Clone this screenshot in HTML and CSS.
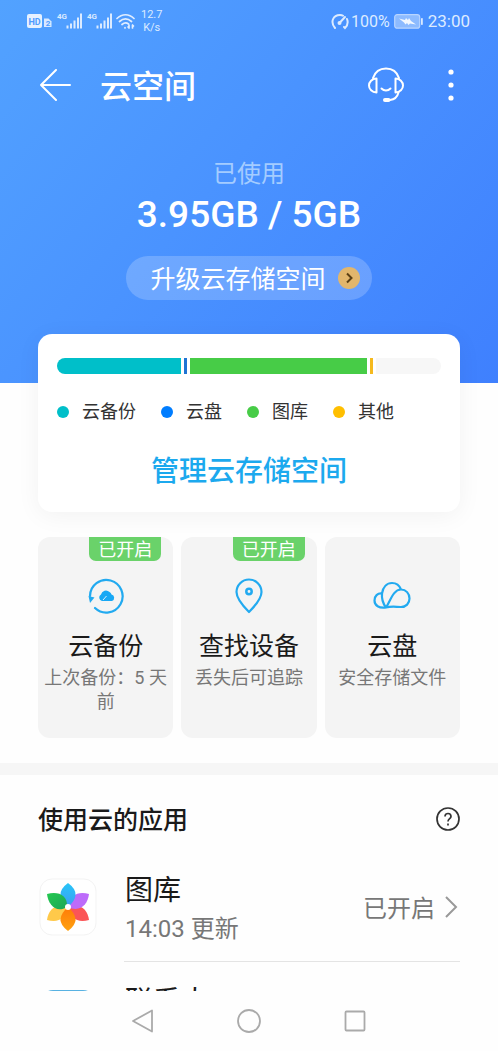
FILE: index.html
```html
<!DOCTYPE html>
<html lang="zh-CN">
<head>
<meta charset="utf-8">
<meta name="viewport" content="width=device-width, initial-scale=1">
<title>云空间</title>
<link rel="stylesheet" href="styles.css">
</head>
<body>
<div class="app">
  <main class="content">
    <div class="hero">
      <div class="status">
        <svg class="hd" width="25" height="16" viewBox="0 0 25 16" aria-hidden="true">
          <rect x="0" y="1" width="15" height="14" rx="2" fill="#e6f1ff"/>
          <text x="7.500" y="12" text-anchor="middle" class="hd-text">HD</text>
          <path d="M17 5.500h4.500l3 3V14h-7.500z" fill="#d9e9ff"/>
          <text x="21" y="13" text-anchor="middle" class="hd-num">2</text>
        </svg>
        <div class="signal">
          <span class="net">4G</span>
          <svg width="16" height="16" viewBox="0 0 16 16" aria-hidden="true"><path d="M1.500 15.500v-3M5 15.500v-5M8.500 15.500v-8M12 15.500v-11M15 15.500v-15" stroke="#dcebff" stroke-width="2"/></svg>
        </div>
        <div class="signal">
          <span class="net">4G</span>
          <svg width="16" height="16" viewBox="0 0 16 16" aria-hidden="true"><path d="M1.500 15.500v-3M5 15.500v-5M8.500 15.500v-8M12 15.500v-11M15 15.500v-15" stroke="#dcebff" stroke-width="2"/></svg>
        </div>
        <svg class="wifi" width="19" height="17" viewBox="0 0 19 17" fill="none" stroke="#e0edff" stroke-width="1.700" stroke-linecap="round" aria-hidden="true">
          <path d="M1 5.500C6 .500 13 .500 18 5.500M3.500 8.500c4-3.500 8-3.500 12 0M6 11.500c2.500-2 4.500-2 6.500-.500"/>
          <path d="M9 14.500v.500M13 12v3M13 15l-1-1M16.500 15v-3M16.500 12l1 1"/>
        </svg>
        <div class="speed"><span>12.7</span><span>K/s</span></div>
        <div class="status-right">
          <svg width="18" height="17" viewBox="0 0 18 17" fill="none" stroke="#dcebff" stroke-width="2" stroke-linecap="round" aria-hidden="true">
            <path d="M4 15C-1 9 2 2 9 2q2 0 3 .700M16 6q2 5-2 9l-1-1"/><path d="M8.500 10 14 4"/><circle cx="8.500" cy="10" r="1"/>
          </svg>
          <span class="percent">100%</span>
          <svg class="battery" width="29" height="15" viewBox="0 0 29 15" aria-hidden="true">
            <rect x=".700" y=".700" width="25" height="13.500" rx="2.500" fill="#8dbbff" stroke="#b9d5ff" stroke-width="1.200"/>
            <path d="M5 4.500 11 6l1-2 2 2 1-2 2 3 5 3.500-6-1-1.500 1.500-1.500-2-1.500 1.500-1.500-2z" fill="#f2f8ff"/>
            <rect x="27" y="4" width="1.800" height="7" rx=".800" fill="#d9e9ff"/>
          </svg>
          <time class="clock">23:00</time>
        </div>
      </div>
      <header class="header">
        <button class="icon-btn" aria-label="返回">
          <svg width="32" height="32" viewBox="0 0 32 32" fill="none" stroke="#fff" stroke-width="2" stroke-linecap="round" stroke-linejoin="round"><path d="M16 1 1 16l15 15M1 16h29"/></svg>
        </button>
        <h1 class="title">云空间</h1>
        <button class="icon-btn" aria-label="客服">
          <svg width="36" height="36" viewBox="0 0 36 36" fill="none" stroke="#fff" stroke-width="2" stroke-linecap="round" stroke-linejoin="round">
            <path d="M5 11C7 5 12 1.500 18 1.500S29 5 31 11"/>
            <path d="M8.500 11.500v14C4 25.500 1 22 1 18.500s3-7 7.500-7zM27.500 11.500v14c4.500 0 7.500-3.500 7.500-7s-3-7-7.500-7z"/>
            <path d="M13.500 21.500c2.500 2.500 6.500 2.500 9 0M30.500 25.500c-1 4-4 7-8.500 7.500"/>
            <path d="M17 33h3.500" stroke-width="4"/>
          </svg>
        </button>
        <button class="icon-btn more" aria-label="更多">
          <svg width="6" height="32" viewBox="0 0 6 32" fill="#fff"><circle cx="3" cy="3" r="2.600"/><circle cx="3" cy="16" r="2.600"/><circle cx="3" cy="29" r="2.600"/></svg>
        </button>
      </header>
      <section class="usage">
        <p class="usage-label">已使用</p>
        <p class="usage-value">3.95GB / 5GB</p>
        <button class="upgrade"><span class="upgrade-text">升级云存储空间</span>
          <svg width="22" height="22" viewBox="0 0 22 22" fill="none"><circle cx="11" cy="11" r="11" fill="#e2b66c"/><path d="m9 6.500 4.500 4.500L9 15.500" stroke="#5b3f13" stroke-width="2"/></svg>
        </button>
      </section>
    </div>

    <section class="card">
      <div class="bar" role="img" aria-label="存储用量">
        <span class="seg backup"></span><span class="seg drive thin"></span><span class="seg gallery"></span><span class="seg other thin"></span><span class="seg free"></span>
      </div>
      <ul class="legend">
        <li><i class="dot backup"></i>云备份</li>
        <li><i class="dot drive"></i>云盘</li>
        <li><i class="dot gallery"></i>图库</li>
        <li><i class="dot other"></i>其他</li>
      </ul>
      <a class="manage" href="#">管理云存储空间</a>
    </section>

    <section class="tiles">
      <button class="tile">
        <span class="badge">已开启</span>
        <svg width="36" height="36" viewBox="0 0 36 36" fill="none" stroke="#22aaf0" stroke-width="2.200">
          <path d="M2 18A16.300 16.300 0 1 1 7 30" stroke-linecap="round"/><path d="M.500 18 6.500 19.500 2 25z" fill="#22aaf0" stroke="none"/>
          <path d="M14.500 23h-.500a3.500 3.500 0 0 1-1-6.500 5 5 0 0 1 8.500-2.500 4 4 0 0 1 2 2.500 3.400 3.400 0 0 1 .500 6.500z" fill="#18a8f5" stroke="none"/><path d="m15 22 3.500-4" stroke="#d8effc" stroke-width="1"/>
        </svg>
        <strong class="tile-name">云备份</strong>
        <span class="tile-note">上次备份：5 天前</span>
      </button>
      <button class="tile">
        <span class="badge">已开启</span>
        <svg width="36" height="36" viewBox="0 0 36 36" fill="none" stroke="#22aaf0" stroke-width="2.200" stroke-linejoin="round">
          <path d="M18 34C12 28 5.500 21 5.500 14a12.500 12.500 0 0 1 25 0c0 7-6.500 14-12.500 20z"/><circle cx="18" cy="13.500" r="2.700" stroke-width="2.500"/>
        </svg>
        <strong class="tile-name">查找设备</strong>
        <span class="tile-note">丢失后可追踪</span>
      </button>
      <button class="tile">
        <svg width="38" height="36" viewBox="0 0 38 36" fill="none" stroke="#22aaf0" stroke-width="2.200" stroke-linejoin="round">
          <path d="M13 29.500C17 24 20 11.500 28 11.500c5 0 8.500 4 8.500 9s-3.500 8.500-8.500 8.500c-5 0-9-1-15 .500-7 1-11.500-2-11.500-7 0-4.500 3-7.500 7.500-7 1-6.500 5-10.500 10-10.500 4 0 7.500 2.500 9 6.500"/>
          <path d="M9 15.500c-.500 5 1 10 4 14"/>
        </svg>
        <strong class="tile-name">云盘</strong>
        <span class="tile-note">安全存储文件</span>
      </button>
    </section>

    <section class="apps">
      <div class="apps-head">
        <h2 class="apps-title">使用云的应用</h2>
        <button class="icon-btn" aria-label="帮助">
          <svg width="24" height="24" viewBox="0 0 24 24" fill="none" stroke="#333" stroke-width="1.700"><circle cx="12" cy="12" r="11"/><path d="M9 9.500c0-4 6-4 6 0 0 2.200-3 2.300-3 5M12 16.500v2"/></svg>
        </button>
      </div>
      <a class="row" href="#">
        <svg class="app-icon" width="60" height="60" viewBox="0 0 60 60">
          <defs>
            <linearGradient id="blue" x1="0" y1="0" x2="0" y2="1"><stop offset="0" stop-color="#27c6f8"/><stop offset="1" stop-color="#3f9cf2"/></linearGradient>
            <linearGradient id="orange" x1="0" y1="0" x2="0" y2="1"><stop offset="0" stop-color="#ff7a08"/><stop offset="1" stop-color="#ffa210"/></linearGradient>
            <linearGradient id="green" x1="0" y1="0" x2="1" y2="1"><stop offset="0" stop-color="#25c950"/><stop offset="1" stop-color="#1aa557"/></linearGradient>
          </defs>
          <rect x="2" y="2" width="56" height="56" rx="12" fill="#fff" stroke="#f3f3f3"/>
          <path d="M30 30C28 42 20 46 9 43 10 33 18 25 30 30z" fill="#ffc94a"/>
          <path d="M30 30C32 42 40 46 51 43 50 33 42 25 30 30z" fill="#fb5557"/>
          <path d="M30 30C32 18 40 14 51 17 50 27 42 36 30 30z" fill="#bd6bfa"/>
          <path d="M30 30Q15 43 30 54q15-11 0-24z" fill="url(#orange)"/>
          <path d="M30 30Q15 17 30 6q15 11 0 24z" fill="url(#blue)"/>
          <path d="M29 30C30 18 20 14 9 17 10 27 18 37 29 30z" fill="url(#green)"/>
          <circle cx="30" cy="30" r="3" fill="#fff"/>
        </svg>
        <span class="row-text"><span class="row-name">图库</span><span class="row-note">14:03 更新</span></span>
        <span class="row-state">已开启</span>
        <svg width="14" height="24" viewBox="0 0 14 24" fill="none" stroke="#999" stroke-width="2"><path d="m2 2 10 10L2 22"/></svg>
      </a>
      <a class="row" href="#">
        <svg class="app-icon" width="60" height="60" viewBox="0 0 60 60"><rect x="3" y="2" width="54" height="56" rx="12" fill="#58b2e2"/></svg>
        <span class="row-text"><span class="row-name">联系人</span></span>
      </a>
    </section>
  </main>

  <nav class="navbar">
    <button class="icon-btn" aria-label="后退"><svg width="24" height="24" viewBox="0 0 24 24" fill="none" stroke="#aaa" stroke-width="1.800" stroke-linejoin="round"><path d="M21 1.500v21L2 12z"/></svg></button>
    <button class="icon-btn" aria-label="主屏幕"><svg width="24" height="24" viewBox="0 0 24 24" fill="none" stroke="#aaa" stroke-width="1.800"><circle cx="12" cy="12" r="11"/></svg></button>
    <button class="icon-btn" aria-label="最近任务"><svg width="24" height="24" viewBox="0 0 24 24" fill="none" stroke="#aaa" stroke-width="1.800"><rect x="2.500" y="2.500" width="19" height="19" rx="1"/></svg></button>
  </nav>
</div>
</body>
</html>
```
FILE: styles.css
```css
* { box-sizing: border-box; }

body, h1, h2, p, ul { margin: 0; padding: 0; }

body {
  font-family: Roboto, "Noto Sans CJK SC", sans-serif;
  color: #1a1a1a;
  background: #fefefe;
}

button {
  border: 0;
  padding: 0;
  background: none;
  font: inherit;
  color: inherit;
}

a { color: inherit; text-decoration: none; }

svg { display: block; flex: none; }

.app {
  display: flex;
  flex-direction: column;
  height: 100vh;
}

.content {
  flex: 1;
  min-height: 0;
  overflow: hidden;
}

.icon-btn { display: flex; flex: none; }

/* Hero */
.hero {
  padding-bottom: 83px;
  background: linear-gradient(130deg, #52a2ff 0%, #4a93ff 45%, #3f80fe 100%);
  color: #fff;
}

.status {
  display: flex;
  align-items: center;
  height: 42px;
  padding: 0 28px 0 27px;
  color: #dcebff;
}

.hd-text { font: bold 9px Roboto, sans-serif; fill: #4f9cff; }
.hd-num { font: bold 8px Roboto, sans-serif; fill: #4f9cff; }

.signal { display: flex; align-items: flex-start; margin-left: 5px; }

.net { width: 9px; font-size: 8px; line-height: 8px; font-weight: 700; }

.wifi { margin-left: 4px; }

.speed {
  display: flex;
  flex-direction: column;
  align-items: center;
  margin-left: 6px;
  font-size: 11px;
  line-height: 13px;
}

.status-right { display: flex; align-items: center; margin-left: auto; }
.percent { margin-left: 2px; font-size: 16px; }
.battery { margin: 0 5px 0 4px; }
.clock { font-size: 17px; }

.header {
  display: flex;
  align-items: center;
  height: 86px;
  padding: 0 44px 0 40px;
}

.title {
  flex: 1;
  margin-left: 28px;
  padding-top: 4px;
  font-size: 32px;
  line-height: 40px;
  font-weight: 500;
}

.more { margin-left: 44px; }

.usage {
  display: flex;
  flex-direction: column;
  align-items: center;
  padding-top: 28px;
}

.usage-label { font-size: 24px; line-height: 36px; color: #a4ccff; }
.usage-value { font-size: 37px; line-height: 46px; font-weight: 500; }

.upgrade {
  display: flex;
  align-items: center;
  gap: 12px;
  height: 44px;
  margin-top: 18px;
  padding: 0 12px 0 24px;
  border-radius: 22px;
  background: rgba(255, 255, 255, 0.2);
}

.upgrade-text {
  padding-top: 4px;
  font-size: 25px;
  line-height: 36px;
}

/* Storage card */
.card {
  position: relative;
  margin: -49px 38px 0;
  padding: 24px 19px 20px;
  border-radius: 14px;
  background: #fff;
  box-shadow: 0 4px 24px rgba(0, 0, 0, 0.05);
}

.bar {
  display: flex;
  gap: 3px;
  height: 16px;
  border-radius: 8px;
  overflow: hidden;
}

.backup { background: #00bfc9; }
.drive { background: #007dff; }
.gallery { background: #47cc47; }
.other { background: #ffbf00; }
.free { background: #f7f7f7; }

.seg.backup { flex: 125; }
.seg.gallery { flex: 178; }
.seg.free { flex: 65; }
.seg.thin { flex: 0 0 3px; }
.seg.drive { background: #1f74d4; }
.seg.other { background: #f5b91e; }

.legend {
  display: flex;
  gap: 25px;
  margin-top: 24px;
  list-style: none;
  font-size: 18px;
  line-height: 28px;
  color: #333;
}

.legend li { display: flex; align-items: center; gap: 13px; }

.dot { width: 12px; height: 12px; border-radius: 50%; }

.manage {
  display: block;
  margin-top: 26px;
  text-align: center;
  font-size: 28px;
  line-height: 40px;
  font-weight: 500;
  color: #1ca9ee;
}

/* Feature tiles */
.tiles {
  display: grid;
  grid-template-columns: repeat(3, 1fr);
  gap: 8px;
  margin: 25px 38px;
}

.tile {
  position: relative;
  display: flex;
  flex-direction: column;
  align-items: center;
  min-height: 200px;
  padding: 41px 4px 24px;
  border-radius: 12px;
  background: #f4f4f4;
}

.badge {
  position: absolute;
  top: 0;
  right: 12px;
  padding: 2px 9px 0;
  border-radius: 0 0 7px 7px;
  background: #6ad26a;
  color: #fff;
  font-size: 18px;
  line-height: 22px;
}

.tile-name {
  margin-top: 15px;
  font-size: 25px;
  line-height: 36px;
  font-weight: 400;
}

.tile-note {
  margin-top: 1px;
  font-size: 18px;
  line-height: 24px;
  color: #777;
}

/* Apps */
.apps {
  padding: 24px 38px 0;
  border-top: 12px solid #f6f6f6;
}

.apps-head {
  display: flex;
  align-items: center;
  justify-content: space-between;
  height: 40px;
}

.apps-title {
  padding-top: 4px;
  font-size: 25px;
  line-height: 36px;
  font-weight: 500;
}

.row {
  position: relative;
  display: flex;
  align-items: center;
  height: 111px;
  padding-right: 2px;
}

.apps-head + .row { margin-top: 12px; }

.row::after {
  content: "";
  position: absolute;
  left: 86px;
  right: 0;
  bottom: 0;
  border-bottom: 1px solid #e4e4e4;
}

.row-text {
  display: flex;
  flex: 1;
  flex-direction: column;
  align-self: flex-start;
  margin-left: 27px;
  padding-top: 20px;
}

.row-name { font-size: 28px; line-height: 40px; }
.row-note { font-size: 24px; line-height: 36px; color: #777; }

.row-state {
  margin-right: 9px;
  padding-top: 4px;
  font-size: 24px;
  line-height: 36px;
  color: #777;
}

/* System navigation */
.navbar {
  display: flex;
  align-items: center;
  justify-content: center;
  gap: 82px;
  height: 60px;
  flex: none;
}
```
